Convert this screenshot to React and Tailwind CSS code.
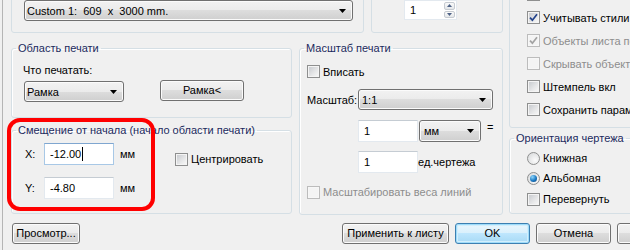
import React from "react";

const btnBg =
  "border border-[#707070] rounded-[3px] bg-[linear-gradient(#f2f2f2,#ebebeb_50%,#dddddd_50%,#cfcfcf)] shadow-[inset_0_0_0_1px_#fbfbfb]";

function Arrow() {
  return (
    <svg width="7" height="4" viewBox="0 0 7 4" className="shrink-0">
      <polygon points="0,0 7,0 3.5,4" fill="#000" />
    </svg>
  );
}

function Combo({ value, className = "" }) {
  return (
    <div className={`flex items-center justify-between pl-[2px] pr-[6px] ${btnBg} ${className}`}>
      <span className="whitespace-pre leading-[14px]">{value}</span>
      <Arrow />
    </div>
  );
}

function Button({ children, className = "", primary }) {
  const look = primary
    ? "border border-[#3c7fb1] rounded-[3px] bg-[linear-gradient(#eaf6fd,#d9f0fc_50%,#bee6fd_50%,#a7d9f5)] shadow-[inset_0_0_0_1px_#9fdcfa,inset_0_0_0_2px_#d2eefc]"
    : btnBg;
  return (
    <div className={`flex h-[21px] shrink-0 items-center justify-center whitespace-nowrap ${look} ${className}`}>
      {children}
    </div>
  );
}

function TextBox({ value, caret, focused, className = "" }) {
  return (
    <div
      className={`flex items-center bg-white pl-[5px] ${
        focused ? "border border-[#a8c8e6] border-t-[#7fa6d0]" : "border border-[#e3e9ef] border-t-[#c5ccd3]"
      } ${className}`}
    >
      <span className="leading-[14px]">{value}</span>
      {caret && <span className="ml-px h-[14px] w-px bg-black" />}
    </div>
  );
}

function Box({ checked, disabled }) {
  return (
    <span
      className={`flex h-[13px] w-[13px] shrink-0 items-center justify-center border ${
        disabled ? "border-[#bcbcbc] bg-[#f7f7f7]" : "border-[#8e8f8f] bg-[#f4f4f4]"
      }`}
    >
      <span
        className={`flex h-[9px] w-[9px] items-center justify-center ${
          disabled
            ? "bg-[#f4f4f4]"
            : "bg-[linear-gradient(135deg,#c9ccd0,#e6e7e8_60%,#f6f6f6)]"
        }`}
      >
        {checked && (
          <svg width="9" height="9" viewBox="0 0 9 9">
            <path
              d="M1 4.6 L3.4 7.2 L8 1.2"
              fill="none"
              stroke={disabled ? "#a3a3a3" : "#22428a"}
              strokeWidth="1.7"
            />
          </svg>
        )}
      </span>
    </span>
  );
}

function Check({ label, checked, disabled, className = "" }) {
  return (
    <div className={`flex items-center whitespace-nowrap ${className}`}>
      <Box checked={checked} disabled={disabled} />
      <span className={`ml-[3px] leading-[14px] ${disabled ? "text-[#8d8d8d]" : ""}`}>{label}</span>
    </div>
  );
}

function Radio({ label, checked, className = "" }) {
  return (
    <div className={`flex items-center whitespace-nowrap ${className}`}>
      <span className="flex h-[13px] w-[13px] shrink-0 items-center justify-center rounded-full border border-[#8e8f8f] bg-[radial-gradient(circle_at_65%_65%,#fbfbfb,#d4d6d8)]">
        {checked && (
          <span className="h-[7px] w-[7px] rounded-full bg-[radial-gradient(circle_at_35%_30%,#8fd6fb,#1a78c2_55%,#0c3f74)]" />
        )}
      </span>
      <span className="ml-[3px] leading-[14px]">{label}</span>
    </div>
  );
}

function Group({ title, className = "", children }) {
  return (
    <fieldset className={`rounded-[3px] border border-[#d5dfe5] shadow-[inset_1px_1px_0_#fff] ${className}`}>
      <legend className="ml-[4px] px-[2px] leading-[14px] text-[#1c2a5e]">{title}</legend>
      {children}
    </fieldset>
  );
}

const sideRows = [
  { label: "Печать с весами линий", checked: true },
  { label: "Учитывать стили печати", checked: true },
  { label: "Объекты листа последними", checked: true, disabled: true },
  { label: "Скрывать объекты листа", disabled: true },
  { label: "Штемпель вкл" },
  { label: "Сохранить параметры" },
];

export default function App() {
  return (
    <div className="relative flex h-[250px] w-[630px] overflow-hidden bg-[#f0f0f0] font-['Liberation_Sans',Arial,sans-serif] text-[11px] text-black">
      <div className="ml-[2px] w-px shrink-0 bg-[#b5b5b5]" />
      <div className="flex min-w-0 flex-1 flex-col">
        <div className="-mt-[30px] flex">
          {/* left + middle */}
          <div className="ml-[8px] flex w-[492px] shrink-0 flex-col">
            <div className="flex h-[63px] gap-[7px]">
              <div className="h-full w-[353px] rounded-[3px] border border-[#d5dfe5] pl-[12px] pr-[10px] pt-[29px]">
                <Combo value="Custom 1:  609  x  3000 mm." className="h-[21px]" />
              </div>
              <div className="h-full w-[132px] rounded-[3px] border border-[#d5dfe5] pl-[32px] pt-[29px]">
                <div className="flex h-[20px] w-[53px] border border-[#e3e9ef] bg-white">
                  <span className="flex-1 pl-[5px] leading-[18px]">1</span>
                  <div className="flex w-[12px] flex-col gap-px py-px pr-px">
                    <span className="flex flex-1 items-center justify-center rounded-[2px] border border-[#c6cbd1] bg-[linear-gradient(#fafafa,#e4e7ea)]">
                      <svg width="5" height="3" viewBox="0 0 5 3"><polygon points="0,3 5,3 2.5,0" fill="#4d6185" /></svg>
                    </span>
                    <span className="flex flex-1 items-center justify-center rounded-[2px] border border-[#c6cbd1] bg-[linear-gradient(#fafafa,#e4e7ea)]">
                      <svg width="5" height="3" viewBox="0 0 5 3"><polygon points="0,0 5,0 2.5,3" fill="#4d6185" /></svg>
                    </span>
                  </div>
                </div>
              </div>
            </div>

            <div className="mt-[8px] flex gap-[7px]">
              <div className="flex w-[281px] flex-col">
                <Group title="Область печати" className="h-[77px]">
                  <div className="mt-[8px] pl-[11px] leading-[14px]">Что печатать:</div>
                  <div className="mt-[3px] flex items-start pl-[12px]">
                    <Combo value="Рамка" className="mt-px h-[21px] w-[100px]" />
                    <Button className="ml-[36px] w-[84px]">Рамка&lt;</Button>
                  </div>
                </Group>
                <Group title="Смещение от начала (начало области печати)" className="mt-[5px] h-[91px]">
                  <div className="mt-[6px] flex h-[22px] items-start">
                    <span className="ml-[13px] w-[19px] leading-[22px]">X:</span>
                    <TextBox value="-12.00" caret focused className="h-[22px] w-[70px]" />
                    <span className="ml-[6px] w-[55px] leading-[22px]">мм</span>
                    <Check label="Центрировать" className="mt-[9px]" />
                  </div>
                  <div className="mt-[12px] flex h-[22px] items-start">
                    <span className="ml-[13px] w-[19px] leading-[22px]">Y:</span>
                    <TextBox value="-4.80" className="h-[22px] w-[70px]" />
                    <span className="ml-[6px] leading-[22px]">мм</span>
                  </div>
                </Group>
              </div>

              <Group title="Масштаб печати" className="h-[174px] w-[204px]">
                <Check label="Вписать" className="mt-[10px] h-[13px] pl-[7px]" />
                <div className="mt-[11px] flex h-[21px] items-center pl-[7px]">
                  <span className="w-[51px] leading-[14px]">Масштаб:</span>
                  <Combo value="1:1" className="h-[21px] w-[135px] pl-[3px]" />
                </div>
                <div className="mt-[10px] flex items-start pl-[58px]">
                  <TextBox value="1" className="h-[22px] w-[60px]" />
                  <Combo value="мм" className="ml-px h-[22px] w-[62px] pl-[4px]" />
                  <span className="ml-[6px] leading-[14px]">=</span>
                </div>
                <div className="mt-[9px] flex items-start pl-[58px]">
                  <TextBox value="1" className="h-[22px] w-[60px]" />
                  <span className="leading-[22px]">ед.чертежа</span>
                </div>
                <Check label="Масштабировать веса линий" disabled className="mt-[12px] pl-[7px]" />
              </Group>
            </div>
          </div>

          {/* right column */}
          <div className="ml-[6px] flex w-[160px] shrink-0 flex-col">
            <div className="h-[158px] rounded-[3px] border border-[#d5dfe5] pt-[12px]">
              {sideRows.map((r) => (
                <Check key={r.label} {...r} className="h-[23px] pl-[17px]" />
              ))}
            </div>
            <Group title="Ориентация чертежа" className="mt-[3px] h-[83px]">
              <Radio label="Книжная" className="mt-[3px] h-[20px] pl-[17px]" />
              <Radio label="Альбомная" checked className="h-[20px] pl-[17px]" />
              <Check label="Перевернуть" className="mt-px h-[20px] pl-[17px]" />
            </Group>
          </div>
        </div>

        <div className="mt-[8px] flex">
          <Button className="ml-[9px] w-[68px]">Просмотр...</Button>
          <Button className="ml-[262px] w-[107px]">Применить к листу</Button>
          <Button primary className="ml-[6px] w-[75px]">OK</Button>
          <Button className="ml-[6px] w-[75px]">Отмена</Button>
          <Button className="ml-[6px] w-[75px]">Справка</Button>
        </div>
      </div>

      <div className="pointer-events-none absolute left-[7px] top-[118px] h-[93px] w-[148px] rounded-[13px] border-4 border-[#ff0000]" />
    </div>
  );
}
